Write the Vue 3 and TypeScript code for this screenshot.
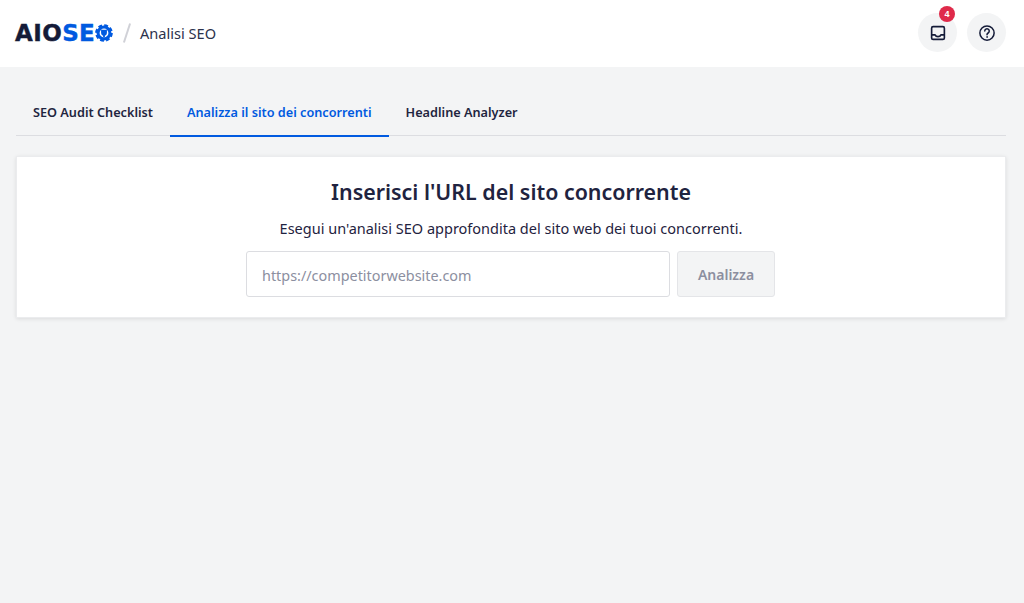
<script setup lang="ts">
const tabs: { label: string; active?: boolean }[] = [
  { label: 'SEO Audit Checklist' },
  { label: 'Analizza il sito dei concorrenti', active: true },
  { label: 'Headline Analyzer' },
]
</script>

<template>
  <div class="page">
    <header class="top">
      <div class="brand">
        <span class="logo"><span class="aio">AIO</span><span class="seo">SE</span>
          <svg class="gear" viewBox="0 0 20 20" width="18" height="18" aria-hidden="true">
            <circle cx="10" cy="10" r="8" fill="none" stroke="#005ae0" stroke-width="3.6" stroke-dasharray="4 2.280" />
            <circle cx="10" cy="10" r="6.600" fill="none" stroke="#005ae0" stroke-width="3.400" />
            <path d="M7.400 6.400v3.400a2.600 2.600 0 0 0 5.200 0V6.400" fill="#005ae0" stroke="#005ae0" stroke-width="1.200" />
            <path d="M10 12v3" stroke="#005ae0" stroke-width="2" />
          </svg>
        </span>
        <span class="slash"></span>
        <span class="crumb">Analisi SEO</span>
      </div>
      <div class="actions">
        <button class="round" type="button" aria-label="Notifiche">
          <svg viewBox="0 0 24 24" width="18" height="18" fill="none" stroke="#141b38" stroke-width="2.200" stroke-linejoin="round" aria-hidden="true">
            <rect x="3.500" y="3.500" width="17" height="17" rx="2" />
            <path d="M3.500 14.500h4.600c.7 1.600 2 2.400 3.900 2.400s3.200-.8 3.900-2.400h4.600" />
          </svg>
          <span class="badge">4</span>
        </button>
        <button class="round" type="button" aria-label="Aiuto">
          <svg viewBox="0 0 24 24" width="18" height="18" fill="none" stroke="#141b38" stroke-width="2" stroke-linecap="round" aria-hidden="true">
            <circle cx="12" cy="12" r="9.500" />
            <path d="M9 9.400a3 3 0 1 1 4.500 2.600c-1 .6-1.500 1.200-1.500 2.200" />
            <circle cx="12" cy="17.300" r=".6" fill="#141b38" stroke-width="1" />
          </svg>
        </button>
      </div>
    </header>

    <main class="content">
      <nav class="tabs">
        <a v-for="t in tabs" :key="t.label" class="tab" :class="{ active: t.active }">{{ t.label }}</a>
      </nav>
      <section class="card">
        <h1>Inserisci l'URL del sito concorrente</h1>
        <p>Esegui un'analisi SEO approfondita del sito web dei tuoi concorrenti.</p>
        <form class="row" @submit.prevent>
          <input class="url" type="text" placeholder="https://competitorwebsite.com" />
          <button class="go" type="button" disabled>Analizza</button>
        </form>
      </section>
    </main>
  </div>
</template>

<style>
html, body { margin: 0; background: #f3f4f5; }
</style>

<style scoped>
.page {
  min-height: 603px;
  background: #f3f4f5;
  font-family: "Noto Sans", "Open Sans", sans-serif;
  color: #141b38;
}
.top {
  height: 67px;
  box-sizing: border-box;
  background: #fff;
  display: flex;
  align-items: center;
  justify-content: space-between;
  padding: 0 18px 2px 15px;
}
.brand { display: flex; align-items: center; }
.logo {
  display: flex;
  align-items: center;
  font-family: "DejaVu Sans", sans-serif;
  font-size: 23px;
  font-weight: 700;
  line-height: 28px;
  letter-spacing: 0.4px;
  width: 99px;
  -webkit-text-stroke: 0.4px currentColor;
}
.aio { color: #141b38; }
.seo { color: #005ae0; }
.gear { flex: none; }
.slash {
  width: 2px;
  height: 20px;
  background: #d0d1d7;
  transform: rotate(18deg);
  margin: 0 12px 0 12px;
}
.crumb { font-size: 14.600px; color: #2c324c; }
.actions { display: flex; gap: 10px; }
.round {
  position: relative;
  width: 39px;
  height: 39px;
  border: 0;
  padding: 0;
  border-radius: 50%;
  background: #f3f4f5;
  display: flex;
  align-items: center;
  justify-content: center;
}
.badge {
  position: absolute;
  top: -7px;
  left: 21px;
  width: 16px;
  height: 16px;
  border-radius: 50%;
  background: #df2a4a;
  color: #fff;
  font-size: 9px;
  font-weight: 700;
  line-height: 16px;
  text-align: center;
}
.content { padding: 24px 18px 0 16px; }
.tabs {
  display: flex;
  height: 45px;
  box-sizing: border-box;
  border-bottom: 1px solid #dcdde1;
}
.tab {
  box-sizing: border-box;
  height: 46px;
  padding: 0 17px;
  font-size: 12.700px;
  font-weight: 600;
  line-height: 42px;
  color: #1f2540;
  white-space: nowrap;
}
.tab.active {
  color: #005ae0;
  border-bottom: 2px solid #005ae0;
}
.card {
  margin-top: 20px;
  height: 162px;
  box-sizing: border-box;
  background: #fff;
  border: 1px solid #ebecee;
  box-shadow: 0 1px 4px rgba(0, 0, 0, 0.1);
  text-align: center;
  padding-top: 20px;
}
h1 {
  margin: 0;
  font-size: 21.400px;
  line-height: 30px;
  font-weight: 600;
  color: #1f2340;
}
p {
  margin: 11px 0 0;
  font-size: 14.500px;
  line-height: 21px;
  color: #1f2340;
}
.row {
  display: flex;
  justify-content: center;
  gap: 7px;
  margin-top: 12px;
  padding-right: 1px;
}
.url {
  width: 424px;
  height: 46px;
  box-sizing: border-box;
  border: 1px solid #dcdde1;
  border-radius: 3px;
  padding: 2px 16px 0 15px;
  font: 400 14.400px "Noto Sans", sans-serif;
  color: #141b38;
  background: #fff;
  outline: none;
}
.url::placeholder { color: #8c8f9f; opacity: 1; }
.go {
  width: 98px;
  height: 46px;
  border: 1px solid #e4e5e8;
  border-radius: 3px;
  padding: 1px 0 0;
  background: #f3f4f5;
  color: #8c8f9f;
  font: 600 14px "Noto Sans", sans-serif;
}
</style>
